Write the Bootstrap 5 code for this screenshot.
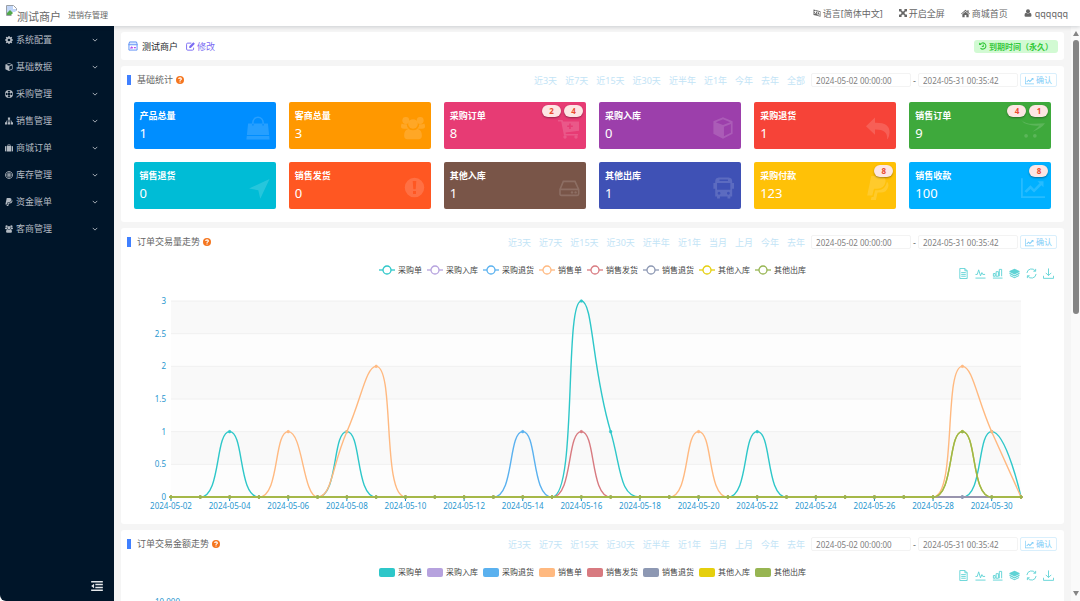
<!DOCTYPE html>
<html lang="zh-CN">
<head>
<meta charset="utf-8">
<meta name="viewport" content="width=device-width, initial-scale=1">
<title>进销存管理</title>
<link href="https://cdn.jsdelivr.net/npm/bootstrap@5.3.0/dist/css/bootstrap.min.css" rel="stylesheet">
<style>
  body { font: 9px/13px "Noto Sans", "Noto Sans CJK SC", sans-serif; color: #666; background: #fff; }
  a { text-decoration: none; color: inherit; }
  svg { display: block; flex: none; fill: currentColor; }
  .i6 { width: 6px; height: 6px; }
  .i8 { width: 8px; height: 8px; }
  .i9 { width: 9px; height: 9px; }
  .i10 { width: 10px; height: 10px; }
  .i11 { width: 11px; height: 11px; }
  .ln { fill: none; stroke: currentColor; }
  .text-8 { font-size: 8px; }
  .g2 { gap: 2px; } .g3 { gap: 3px; } .g16 { gap: 16px; }

  .topbar { height: 26px; padding: 0 12px 0 6px; background: #fff; box-shadow: 0 1px 4px rgba(0,21,41,.18); z-index: 2; }
  .brand-name { font-size: 11px; line-height: 16px; padding-top: 8px; }
  .brand-sub { font-size: 8px; padding: 7px 0 0 7px; }
  .sidebar { width: 114px; background: #001529; color: #b3bac2; border-bottom-left-radius: 6px; }
  .sidebar .menu-link { display: flex; align-items: center; gap: 3px; height: 27px; padding: 0 16px 0 5px; }
  .sidebar .menu-link:hover { color: #fff; }
  .collapse-btn { border: 0; background: none; color: #e4e7ea; padding: 0 11px 10px; }

  .workspace { background: #f5f5f5; padding: 6px 7px 0; min-width: 0; }
  .panel { background: #fff; border-radius: 3px; margin-bottom: 6px; }
  .shop-row { height: 28px; padding: 0 6px 0 7px; }
  .edit-link { color: #7b6cf3; }
  .expiry { background: #d2fad3; color: #35c93c; border-radius: 3px; height: 13px; padding: 0 5px; font-size: 8px; font-weight: 700; }
  .panel-head { padding: 6px 7px 1px 6px; }
  .panel-title { font-size: 9px; line-height: 16px; margin: 0; font-weight: 400; color: #666; }
  .panel-title::before { content: ""; width: 4px; height: 10px; background: #4080ff; margin-right: 3px; }
  .help { color: #f5761f; }
  .ranges { gap: 8px; margin-right: 6px; }
  .ranges a { color: #c3e4f6; }
  .date-box { width: 100px; height: 14px; border: 1px solid #f3f3f3; border-radius: 2px; padding: 0 4px; font-size: 8px; color: #808080; background: #fff; }
  .ok-btn { height: 14px; line-height: 12px; border: 1px solid #d9effc; border-radius: 2px; background: #fff; color: #7fcdf8; font-size: 8px; padding: 0 4px; }

  .stats { --bs-gutter-x: 13px; --bs-gutter-y: 13px; margin: 0 6px; padding: 0 0 13px; }
  .stat { position: relative; height: 47px; border-radius: 2px; color: #fff; padding: 7px 6px 5px; }
  .stat-name { font-weight: 700; line-height: 13px; }
  .stat-num { font-size: 13px; line-height: 22px; }
  .stat > svg { width: 24px; height: 24px; opacity: .15; margin-top: 7px; }
  .pills { position: absolute; top: 3px; right: 3px; gap: 3px; }
  .pill { width: 19px; height: 12px; line-height: 12px; border-radius: 6px; background: #fde6e4; color: #ea4b2f; font-size: 8px; font-weight: 700; text-align: center; box-shadow: 0 1px 2px rgba(0,0,0,.35); }

  .chart-top { display: grid; grid-template-columns: 1fr auto 1fr; height: 16px; margin-top: 13px; }
  .legend-list { font-size: 8px; line-height: 12px; color: #444; height: 12px; gap: 5px; }
  .legend-list .swatch { width: 16px; height: 9px; border-radius: 2px; }
  .tools { color: #5fd3d5; gap: 6px; padding: 0 10px 1px 0; }
  .chart { width: 100%; height: 244px; }
  .chart text { font-size: 8px; fill: #2a97cf; }

  .track { width: 9px; background: #fafafa; padding: 5px 1px; color: #858585; }
  .track .thumb { width: 6px; height: 274px; border-radius: 3px; background: #858585; margin-top: 4px; }
</style>
</head>
<body>
<svg width="0" height="0" class="position-absolute" aria-hidden="true">
  <symbol id="gear" viewBox="0 0 16 16"><path fill-rule="evenodd" d="M6.8 0h2.4l.4 2.1 1.4.6 1.8-1.2 1.7 1.7-1.2 1.8.6 1.4 2.1.4v2.4l-2.1.4-.6 1.4 1.2 1.8-1.7 1.7-1.8-1.2-1.4.6-.4 2.1H6.800l-.4-2.1-1.4-.6-1.8 1.2-1.7-1.700 1.200-1.800-.6-1.400L0 9.200V6.800l2.100-.4.6-1.400L1.500 3.200l1.700-1.700L5 2.700l1.400-.6zM8 5.300a2.700 2.700 0 1 0 0 5.400 2.700 2.700 0 0 0 0-5.400z"/></symbol>
  <symbol id="cube" viewBox="0 0 16 16"><path fill-rule="evenodd" d="M8 0l7.200 2.900v9.500L8 16 .8 12.400V2.900zM8 1.500L2.600 3.600 8 5.700l5.400-2.100zM8.700 7v7.200l5.200-2.600V5z"/></symbol>
  <symbol id="box" viewBox="-1 -1 18 18"><path fill-rule="evenodd" d="M8 0l7.200 2.900v9.500L8 16 .8 12.400V2.900zM8 1.500L2.600 3.600 8 5.700l5.400-2.100zM8.700 7v7.200l5.200-2.600V5z"/></symbol>
  <symbol id="ring" viewBox="0 0 16 16"><path fill-rule="evenodd" d="M8 0a8 8 0 1 1 0 16A8 8 0 0 1 8 0zM5.400 1.900L6.500 4.500h3l1.100-2.600a7 7 0 0 0-5.200 0zM1.900 5.400a7 7 0 0 0 0 5.200l2.600-1.100v-3zM14.100 5.400l-2.600 1.100v3l2.600 1.100a7 7 0 0 0 0-5.200zM5.400 14.100a7 7 0 0 0 5.200 0l-1.100-2.600h-3zM8 5a3 3 0 1 0 0 6 3 3 0 0 0 0-6z"/></symbol>
  <symbol id="tree" viewBox="0 0 16 16"><path d="M5.800 1h4.400v4.400H8.700v1.900H14v3.200h2V15h-4.500v-4.500h1.300v-2H8.700v2h1.500V15H5.800v-4.500h1.500v-2H3.200v2h1.300V15H0v-4.500h2V7.300h5.300V5.400H5.800z"/></symbol>
  <symbol id="case" viewBox="0 0 16 16"><path fill-rule="evenodd" d="M5 4V2q0-1 1-1h4q1 0 1 1v2h1v11H4V4zm1.300 0h3.400V2.300H6.300zM0 5.500Q0 4 1.500 4h1.300v11H1.500Q0 15 0 13.500zM13.200 4h1.300Q16 4 16 5.500v8q0 1.500-1.500 1.500h-1.300z"/></symbol>
  <symbol id="target" viewBox="0 0 16 16"><path class="ln" stroke-width="1.700" d="M8 1a7 7 0 1 0 .01 0zM8 4a4 4 0 1 0 .01 0z"/><circle cx="8" cy="8" r="2.200"/></symbol>
  <symbol id="pay" viewBox="0 0 16 16"><path d="M3.500 0h6q4 .2 3.500 4-1 4.500-5.500 4.500H5.300L4.200 13H.8z"/><path d="M14 3.800q1.400 1.400.8 3.300-1 3.900-5 3.900H7.700L6.600 16H3.200l.5-2H5l1.100-4.500h2Q13 9.200 14 3.800z"/></symbol>
  <symbol id="group" viewBox="0 0 16 16"><circle cx="3.200" cy="3" r="2.300"/><circle cx="12.800" cy="3" r="2.300"/><circle cx="8" cy="5.300" r="3.200"/><path d="M1.500 5.500h2.300q.1 2.200 1.500 3H2Q0 8.500 0 7q0-1.500.5-2zM14.500 5.500h-2.300q-.1 2.200-1.500 3H14q2 0 2-1.500t-.5-2zM5 8.600q3 1.800 6 0 2.900.4 2.900 4.400 0 2.500-2.200 2.500H4.300Q2.100 15.500 2.100 13q0-4 2.900-4.400z"/></symbol>
  <symbol id="down" viewBox="0 0 8 8"><path class="ln" stroke-width="1.200" d="M1 2.500l3 3 3-3"/></symbol>
  <symbol id="outdent" viewBox="0 0 14 12"><path d="M0 0h14v1.800H0zM5 3.400h9v1.800H5zM5 6.800h9v1.800H5zM0 10.200h14V12H0zM0 6l3.500-2.800v5.600z"/></symbol>
  <symbol id="lang" viewBox="0 0 16 16"><path fill-rule="evenodd" d="M1 1l8 2 6 1.500v11L8 13.500 1 12zM8.500 4.700v7.500l5.300 1.500V6zM2.200 4v1.300h2.200q-.5 2-2 3.600l.9.900q.9-.9 1.600-1.900l1.300 1.500.8-1L5.700 6.900q.4-.8.600-1.600h1.200V4H5.400V3H4.200v1z"/><path d="M10.500 6.500h1.300l1.500 6-1.200-.3-.3-1.200-1.400-.4-.4 1-1.100-.3z"/></symbol>
  <symbol id="arrows" viewBox="0 0 16 16"><path d="M0 0h6L4.200 1.800 8 5.600l3.800-3.800L10 0h6v6l-1.800-1.800L10.400 8l3.800 3.800L16 10v6h-6l1.800-1.800L8 10.400l-3.800 3.800L6 16H0v-6l1.800 1.800L5.600 8 1.800 4.200 0 6z"/></symbol>
  <symbol id="home" viewBox="0 0 16 16"><path d="M8 1.500l3.300 2.800V2.200h2.200v4L16 8.400l-.9 1L8 3.400.9 9.400 0 8.400zM8 4.800l5.600 4.700v5.200H9.500v-4h-3v4H2.400V9.500z"/></symbol>
  <symbol id="user" viewBox="0 0 16 16"><circle cx="8" cy="4.500" r="4"/><path d="M4 7.500q4 3 8 0 3 .6 3 5 0 3-2.500 3h-9Q1 15.500 1 12.500q0-4.400 3-5z"/></symbol>
  <symbol id="shop" viewBox="0 0 16 16"><path fill="#dbe8ff" stroke="#5b8ff5" stroke-width="1.500" d="M2.500 1.500h11L15 6H1z"/><path fill="none" stroke="#5b8ff5" stroke-width="1.500" d="M1.500 6v8.500h13V6"/><path fill="none" stroke="#b04df0" stroke-width="2" d="M4 12l2-2 1.500 1.500M9.500 10.500h3"/></symbol>
  <symbol id="edit" viewBox="0 0 16 16"><path class="ln" stroke-width="1.700" d="M9.500 2H3Q1 2 1 4v8.500q0 2 2 2h8.500q2 0 2-2V10"/><path d="M13 .5L15.800 3.300 8.600 10.500H5.800V7.700z"/></symbol>
  <symbol id="history" viewBox="0 0 16 16"><path class="ln" stroke-width="2.200" d="M2.500 4.500A6.200 6.200 0 1 1 3 12.200M8.500 5v4H5.500"/><path d="M0 .8l5.600 5.400H0z"/></symbol>
  <symbol id="quest" viewBox="0 0 16 16"><circle cx="8" cy="8" r="8"/><path fill="none" stroke="#fff" stroke-width="2.200" d="M5.200 6q.3-2.300 2.900-2.300 2.700.1 2.700 2.100 0 1.200-1.300 1.900Q8 8.400 8 9.800"/><path fill="#fff" d="M6.900 11h2.300v2.200H6.900z"/></symbol>
  <symbol id="line" viewBox="0 0 16 16"><path d="M0 1.500h1.200v12H16v1.200H0z"/><path d="M2.300 10.200l4-4 2.400 2.400 3.700-3.700L11 3.500h4v4l-1.400-1.400-4.900 4.900-2.400-2.400-2.600 2.600z"/></symbol>
  <symbol id="bag" viewBox="0 0 16 16"><path d="M1.400 5h2.700v1.300h1V5h5.800v1.300h1V5h2.700l.8 7.700H.6zM.5 13.300h15l.2 2.400H.3z"/><path class="ln" d="M4.600 5.500V4.200a3.400 3.400 0 0 1 6.800 0v1.300"/></symbol>
  <symbol id="cartplus" viewBox="0 0 24 24"><path fill-rule="evenodd" d="M2 4h4.500l.7 1.500H23v9.200L9.500 16.500l.3 1.500H22v1.600H8L5.200 5.600H2zM13.200 7.500v2h-2v1.600h2v2h1.600v-2h2V9.500h-2v-2z"/><circle cx="9" cy="21" r="1.700"/><circle cx="20" cy="21" r="1.700"/></symbol>
  <symbol id="reply" viewBox="0 0 16 16"><path d="M6 1v3.500q9.700-.3 9.700 6.300 0 2.300-1.300 4.700-.4 0-.3-.6.200-6.100-8.100-5.900v3.500L0 6.800z"/></symbol>
  <symbol id="cart" viewBox="0 0 26 24"><path d="M0 3q4 4.700 14 4.500l12-.7q-3 5-13.500 9.200 5.500-3.700 7.500-6.600-7 .8-13-1.400Q2 6.500 0 3z"/><circle cx="5.500" cy="20.500" r="2"/><circle cx="15" cy="20.500" r="2"/></symbol>
  <symbol id="plane" viewBox="0 0 16 16"><path d="M15.700 2L9.500 15.200 8.200 9.500 2 8.400z"/></symbol>
  <symbol id="warn" viewBox="0 0 16 16"><path fill-rule="evenodd" d="M9 1.200a6.500 6.500 0 1 1 0 13 6.500 6.500 0 0 1 0-13zM7.800 3.300l.4 5.600h1.600l.4-5.600zM8 10v2h2v-2z"/></symbol>
  <symbol id="disk" viewBox="-2 -1 18 18"><path class="ln" stroke-width="1.200" d="M3.500 3h8.700l2.800 6v3.500q0 1-1 1H2q-1 0-1-1V9zM1 9h14"/><circle cx="10" cy="11.300" r=".9"/><circle cx="12.700" cy="11.300" r=".9"/></symbol>
  <symbol id="bus" viewBox="-1 -1 17 17"><path fill-rule="evenodd" d="M4.500 0h7Q14 .3 14 2.500V4h1.300v4H14v5.500h-1.300V15h-2v-1.500H5.300V15h-2v-1.500H2V8H.7V4H2V2.500Q2 .3 4.500 0zM5 1.500v1h6v-1zM3.300 4v4.700h9.400V4zM4.700 10.200a1 1 0 1 0 .01 0zM11.300 10.200a1 1 0 1 0 .01 0z"/></symbol>
  <symbol id="t0" viewBox="0 0 12 12"><path class="ln" d="M2 .5h5.500L10 3v8.500H2zM7.500.5V3H10M3.500 5h5M3.500 7h5M3.500 9h5"/></symbol>
  <symbol id="t1" viewBox="0 0 12 12"><path class="ln" d="M.5 7h2L4 2l2 6.500L7.500 5l1 2h2.500M.5 11h11"/></symbol>
  <symbol id="t2" viewBox="0 0 12 12"><path class="ln" d="M1.500 9V6h2v3zM4.500 9V4h2.500v5zM8 9V1.500h2.500V9M1 11h10.500"/></symbol>
  <symbol id="t3" viewBox="0 0 12 12"><path d="M6 .8l5.500 2.500v1L6 7 .5 4.300v-1zM.5 5L6 7.800 11.500 5v1.500L6 9.300.5 6.500zM1 7.500l5 2.500 5-2.500v1.200l-5 2.500-5-2.500z"/></symbol>
  <symbol id="t4" viewBox="0 0 12 12"><path class="ln" d="M1 5.500A5 5 0 0 1 10.200 3.300M11 6.500A5 5 0 0 1 1.800 8.700M10.500 1v2.500H8M1.500 11V8.500H4"/></symbol>
  <symbol id="t5" viewBox="0 0 12 12"><path class="ln" d="M6 .5V8M3 5.300l3 3 3-3M.5 8.500v2.800h11V8.500"/></symbol>
</svg>

<div class="vh-100 d-flex flex-column overflow-hidden">
  <header class="topbar d-flex align-items-center justify-content-between flex-shrink-0 position-relative">
    <a href="#" class="d-flex align-items-start">
      <svg width="11" height="11" viewBox="0 0 11 11" class="mt-1"><path fill="#fff" stroke="#9aa0a6" d="M.5.500h7l3 3v7H.5z"/><path fill="#c2d6f8" d="M1 1h6v3h3v3L6 7 1 9z"/><path fill="#53a84a" d="M1 10V8l3-3 3 3-2 2z"/><path fill="#fff" d="M5 11l6-6v6z"/></svg>
      <span class="brand-name">测试商户</span>
      <span class="brand-sub">进销存管理</span>
    </a>
    <nav class="d-flex g16">
      <a href="#" class="d-flex align-items-center g2"><svg class="i8"><use href="#lang"/></svg>语言[简体中文]</a>
      <a href="#" class="d-flex align-items-center g2"><svg class="i8"><use href="#arrows"/></svg>开启全屏</a>
      <a href="#" class="d-flex align-items-center g2"><svg class="i9"><use href="#home"/></svg>商城首页</a>
      <a href="#" class="d-flex align-items-center g3"><svg class="i8"><use href="#user"/></svg>qqqqqq</a>
    </nav>
  </header>

  <div class="d-flex flex-grow-1 overflow-hidden">
    <aside class="sidebar d-flex flex-column justify-content-between flex-shrink-0">
      <nav>
        <a href="#" class="menu-link"><svg class="i8"><use href="#gear"/></svg>系统配置<svg class="i6 ms-auto"><use href="#down"/></svg></a>
        <a href="#" class="menu-link"><svg class="i8"><use href="#cube"/></svg>基础数据<svg class="i6 ms-auto"><use href="#down"/></svg></a>
        <a href="#" class="menu-link"><svg class="i8"><use href="#ring"/></svg>采购管理<svg class="i6 ms-auto"><use href="#down"/></svg></a>
        <a href="#" class="menu-link"><svg class="i8"><use href="#tree"/></svg>销售管理<svg class="i6 ms-auto"><use href="#down"/></svg></a>
        <a href="#" class="menu-link"><svg class="i8"><use href="#case"/></svg>商城订单<svg class="i6 ms-auto"><use href="#down"/></svg></a>
        <a href="#" class="menu-link"><svg class="i8"><use href="#target"/></svg>库存管理<svg class="i6 ms-auto"><use href="#down"/></svg></a>
        <a href="#" class="menu-link"><svg class="i8"><use href="#pay"/></svg>资金账单<svg class="i6 ms-auto"><use href="#down"/></svg></a>
        <a href="#" class="menu-link"><svg class="i8"><use href="#group"/></svg>客商管理<svg class="i6 ms-auto"><use href="#down"/></svg></a>
      </nav>
      <button class="collapse-btn align-self-end" aria-label="收起菜单"><svg width="12" height="10"><use href="#outdent"/></svg></button>
    </aside>

    <main class="workspace flex-grow-1 overflow-hidden">
      <section class="panel shop-row d-flex align-items-center">
        <svg class="i10"><use href="#shop"/></svg>
        <span class="text-dark ms-1">测试商户</span>
        <a href="#" class="edit-link d-flex align-items-center g2 ms-2"><svg class="i9"><use href="#edit"/></svg>修改</a>
        <span class="expiry d-flex align-items-center g2 ms-auto"><svg class="i8"><use href="#history"/></svg>到期时间（永久）</span>
      </section>

      <section class="panel">
        <div class="panel-head d-flex align-items-center">
          <h2 class="panel-title d-flex align-items-center g3">基础统计<svg class="i8 help"><use href="#quest"/></svg></h2>
          <div class="ranges d-flex ms-auto" data-ranges="近3天 近7天 近15天 近30天 近半年 近1年 今年 去年 全部"></div>
          <div data-period></div>
        </div>
        <div class="row row-cols-6 stats">
          <div class="col"><div class="stat d-flex justify-content-between" style="background:#008eff"><div><div class="stat-name">产品总量</div><div class="stat-num">1</div></div><svg><use href="#bag"/></svg></div></div>
          <div class="col"><div class="stat d-flex justify-content-between" style="background:#ff9800"><div><div class="stat-name">客商总量</div><div class="stat-num">3</div></div><svg><use href="#group"/></svg></div></div>
          <div class="col"><div class="stat d-flex justify-content-between" style="background:#e73b74"><div><div class="stat-name">采购订单</div><div class="stat-num">8</div></div><svg><use href="#cartplus"/></svg><div class="pills d-flex"><span class="pill">2</span><span class="pill">4</span></div></div></div>
          <div class="col"><div class="stat d-flex justify-content-between" style="background:#9c3fab"><div><div class="stat-name">采购入库</div><div class="stat-num">0</div></div><svg><use href="#box"/></svg></div></div>
          <div class="col"><div class="stat d-flex justify-content-between" style="background:#f64338"><div><div class="stat-name">采购退货</div><div class="stat-num">1</div></div><svg><use href="#reply"/></svg></div></div>
          <div class="col"><div class="stat d-flex justify-content-between" style="background:#3ea93c"><div><div class="stat-name">销售订单</div><div class="stat-num">9</div></div><svg><use href="#cart"/></svg><div class="pills d-flex"><span class="pill">4</span><span class="pill">1</span></div></div></div>
          <div class="col"><div class="stat d-flex justify-content-between" style="background:#00bcd6"><div><div class="stat-name">销售退货</div><div class="stat-num">0</div></div><svg><use href="#plane"/></svg></div></div>
          <div class="col"><div class="stat d-flex justify-content-between" style="background:#ff5722"><div><div class="stat-name">销售发货</div><div class="stat-num">0</div></div><svg><use href="#warn"/></svg></div></div>
          <div class="col"><div class="stat d-flex justify-content-between" style="background:#795548"><div><div class="stat-name">其他入库</div><div class="stat-num">1</div></div><svg><use href="#disk"/></svg></div></div>
          <div class="col"><div class="stat d-flex justify-content-between" style="background:#3f51b5"><div><div class="stat-name">其他出库</div><div class="stat-num">1</div></div><svg><use href="#bus"/></svg></div></div>
          <div class="col"><div class="stat d-flex justify-content-between" style="background:#ffc107"><div><div class="stat-name">采购付款</div><div class="stat-num">123</div></div><svg><use href="#pay"/></svg><div class="pills d-flex"><span class="pill">8</span></div></div></div>
          <div class="col"><div class="stat d-flex justify-content-between" style="background:#00b0ff"><div><div class="stat-name">销售收款</div><div class="stat-num">100</div></div><svg><use href="#line"/></svg><div class="pills d-flex"><span class="pill">8</span></div></div></div>
        </div>
      </section>

      <section class="panel">
        <div class="panel-head d-flex align-items-center">
          <h2 class="panel-title d-flex align-items-center g3">订单交易量走势<svg class="i8 help"><use href="#quest"/></svg></h2>
          <div class="ranges d-flex ms-auto" data-ranges="近3天 近7天 近15天 近30天 近半年 近1年 当月 上月 今年 去年"></div>
          <div data-period></div>
        </div>
        <div class="chart-top"><span></span><div class="legend-list d-flex" data-legend="line"></div><div class="tools d-flex justify-content-end align-items-end"></div></div>
        <svg class="chart" id="volume" role="img" aria-label="订单交易量走势"></svg>
      </section>

      <section class="panel">
        <div class="panel-head d-flex align-items-center">
          <h2 class="panel-title d-flex align-items-center g3">订单交易金额走势<svg class="i8 help"><use href="#quest"/></svg></h2>
          <div class="ranges d-flex ms-auto" data-ranges="近3天 近7天 近15天 近30天 近半年 近1年 当月 上月 今年 去年"></div>
          <div data-period></div>
        </div>
        <div class="chart-top"><span></span><div class="legend-list d-flex" data-legend="bar"></div><div class="tools d-flex justify-content-end align-items-end"></div></div>
        <svg class="chart" id="amount" role="img" aria-label="订单交易金额走势"></svg>
      </section>
    </main>

    <div class="track d-flex flex-column align-items-center flex-shrink-0" aria-hidden="true">
      <svg width="6" height="5" viewBox="0 0 6 5"><path d="M3 0l3 5H0z"/></svg>
      <div class="thumb"></div>
      <svg width="6" height="5" viewBox="0 0 6 5" class="mt-auto"><path d="M3 5l3-5H0z"/></svg>
    </div>
  </div>
</div>

<script src="https://cdn.jsdelivr.net/npm/bootstrap@5.3.0/dist/js/bootstrap.bundle.min.js"></script>
<script>
  // Series: values keyed by day of May 2024, zero elsewhere
  const series = [
    ['采购单', '#2ec7c9', {4: 1, 8: 1, 16: 3, 17: 1, 22: 1, 30: 1}],
    ['采购入库', '#b6a2de', {}],
    ['采购退货', '#5ab1ef', {14: 1}],
    ['销售单', '#ffb980', {6: 1, 8: 1, 9: 2, 20: 1, 29: 2, 30: 1}],
    ['销售发货', '#d87a80', {16: 1}],
    ['销售退货', '#8d98b3', {}],
    ['其他入库', '#e5cf0d', {29: 1}],
    ['其他出库', '#97b552', {29: 1}]
  ];
  const all = s => document.querySelectorAll(s);

  all('[data-ranges]').forEach(el => {
    el.innerHTML = el.dataset.ranges.split(' ').map(t => `<a href="#">${t}</a>`).join('');
  });
  all('[data-period]').forEach(el => {
    el.className = 'd-flex align-items-center g2';
    el.innerHTML = `<input class="date-box" type="text" aria-label="开始时间" value="2024-05-02 00:00:00"><span>-</span>
      <input class="date-box" type="text" aria-label="结束时间" value="2024-05-31 00:35:42">
      <button class="ok-btn d-flex align-items-center g2"><svg class="i9"><use href="#line"/></svg>确认</button>`;
  });
  all('.tools').forEach(el => {
    el.innerHTML = [0, 1, 2, 3, 4, 5].map(i => `<svg class="i11"><use href="#t${i}"/></svg>`).join('');
  });
  all('[data-legend]').forEach(el => {
    const mark = c => el.dataset.legend === 'line'
      ? `<svg width="16" height="10" viewBox="0 0 16 10"><path stroke="${c}" stroke-width="1.300" d="M0 5h16"/><circle cx="8" cy="5" r="4" fill="#fff" stroke="${c}" stroke-width="1.300"/></svg>`
      : `<span class="swatch" style="background:${c}"></span>`;
    el.innerHTML = series.map(s => `<span class="d-flex align-items-center g3">${mark(s[1])}${s[0]}</span>`).join('');
  });

  // Smooth curve whose control points never leave the box of neighbouring points
  function curve(p) {
    const clamp = (v, a, b) => Math.max(Math.min(a, b), Math.min(Math.max(a, b), v));
    const dist = (a, b) => Math.hypot(a[0] - b[0], a[1] - b[1]);
    let d = `M${p[0]}`, out = p[0];
    for (let i = 1; i < p.length; i++) {
      const a = p[i - 1], b = p[i], n = p[i + 1];
      let inn = b, next = b;
      if (n) {
        const lp = dist(a, b), ln = dist(b, n), r = ln / (ln + lp);
        next = [0, 1].map(k => clamp(b[k] + (n[k] - a[k]) * .5 * r, b[k], n[k]));
        inn = [0, 1].map(k => clamp(b[k] - (next[k] - b[k]) * lp / ln, a[k], b[k]));
        next = [0, 1].map(k => b[k] + (b[k] - inn[k]) * ln / lp);
      }
      d += `C${out} ${inn} ${b}`;
      out = next;
    }
    return d;
  }

  function drawVolume() {
    const el = document.getElementById('volume'), w = el.clientWidth;
    const x0 = 50, x1 = w - 43, top = 21, base = 217;
    const X = day => x0 + (day - 2) * (x1 - x0) / 29, Y = v => base - v * (base - top) / 3;
    let s = '';
    for (let i = 0; i < 6; i++) {
      const y = Y(3 - i / 2);
      s += `<rect x="${x0}" y="${y}" width="${x1 - x0}" height="${(base - top) / 6}" fill="${i % 2 ? '#fdfdfd' : '#f9f9f9'}"/>
        <path stroke="#f0f0f0" d="M${x0} ${y}H${x1}"/>`;
    }
    for (let i = 0; i <= 6; i++) s += `<text x="${x0 - 5}" y="${Y(i / 2) + 3}" text-anchor="end">${i / 2}</text>`;
    s += `<path stroke="#008acd" d="M${x0} ${base}H${x1}"/>`;
    for (let day = 2; day <= 30; day += 2) {
      s += `<path stroke="#008acd" d="M${X(day)} ${base}v4"/><text x="${X(day)}" y="${base + 12}" text-anchor="middle">2024-05-${String(day).padStart(2, '0')}</text>`;
    }
    for (const [, c, vals] of series) {
      const pts = [];
      for (let day = 2; day <= 31; day++) pts.push([X(day), Y(vals[day] || 0)]);
      s += `<path fill="none" stroke="${c}" stroke-width="1.400" d="${curve(pts)}"/>`;
      s += pts.map(p => `<circle cx="${p[0]}" cy="${p[1]}" r="1.300" fill="${c}" stroke="${c}" stroke-width=".6"/>`).join('');
    }
    el.innerHTML = s;
  }

  function drawAmount() {
    const el = document.getElementById('amount'), w = el.clientWidth;
    el.innerHTML = `<text x="59" y="23" text-anchor="end">10,000</text><rect x="64" y="21" width="${w - 107}" height="33" fill="#f9f9f9"/>`;
  }
  function draw() { drawVolume(); drawAmount(); }
  draw();
  addEventListener('resize', draw);
</script>
</body>
</html>
